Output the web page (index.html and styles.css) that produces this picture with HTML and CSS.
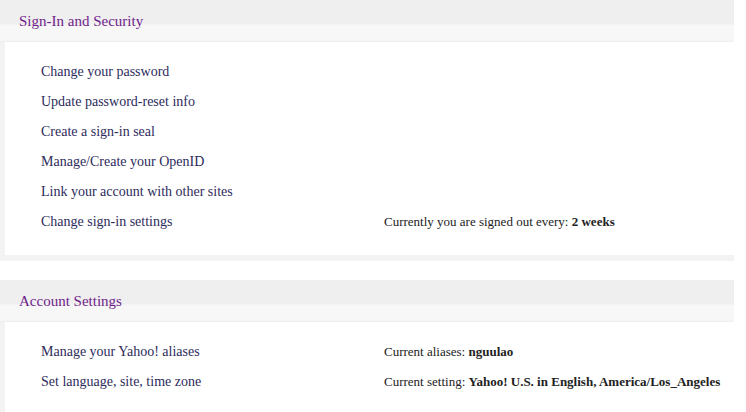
FILE: index.html
```html
<!DOCTYPE html>
<html lang="en">
<head>
    <meta charset="UTF-8">
    <title>Account Info</title>
    <link rel="stylesheet" href="styles.css">
</head>
<body>
    <div class="page">
        <div class="panel">
            <h2 class="panel-head">Sign-In and Security</h2>
            <div class="panel-body">
                <div class="row"><a href="#">Change your password</a></div>
                <div class="row"><a href="#">Update password-reset info</a></div>
                <div class="row"><a href="#">Create a sign-in seal</a></div>
                <div class="row"><a href="#">Manage/Create your OpenID</a></div>
                <div class="row"><a href="#">Link your account with other sites</a></div>
                <div class="row"><a href="#">Change sign-in settings</a><span class="info">Currently you are signed out every: <b>2 weeks</b></span></div>
            </div>
        </div>

        <div class="panel">
            <h2 class="panel-head">Account Settings</h2>
            <div class="panel-body">
                <div class="row"><a href="#">Manage your Yahoo! aliases</a><span class="info">Current aliases: <b>nguulao</b></span></div>
                <div class="row"><a href="#">Set language, site, time zone</a><span class="info">Current setting: <b>Yahoo! U.S. in English, America/Los_Angeles</b></span></div>
            </div>
        </div>
    </div>
</body>
</html>
```

FILE: styles.css
```css
body {
    margin: 0;
    background-color: #fff;
    font-family: "Liberation Serif", "Times New Roman", serif;
    color: #222;
}
.page {
    width: 734px;
}
.panel {
    margin-bottom: 19px;
    background-color: #f3f3f3;
    padding-bottom: 6px;
}
.panel-head {
    margin: 0;
    height: 42px;
    line-height: 42px;
    padding-left: 19px;
    font-size: 15px;
    font-weight: normal;
    color: #6f1d8c;
    background: linear-gradient(#efefef 0, #efefef 24px, #f7f7f7 25px, #f7f7f7 40px, #ececec 42px);
}
.panel-body {
    margin-left: 5px;
    background-color: #fff;
    padding: 15px 0 18px 36px;
}
.row {
    display: flex;
    align-items: baseline;
    height: 30px;
    line-height: 30px;
}
.row a {
    width: 343px;
    font-size: 14px;
    color: #2d2b5c;
    text-decoration: none;
}
.info {
    font-size: 13px;
    color: #222;
}
```
